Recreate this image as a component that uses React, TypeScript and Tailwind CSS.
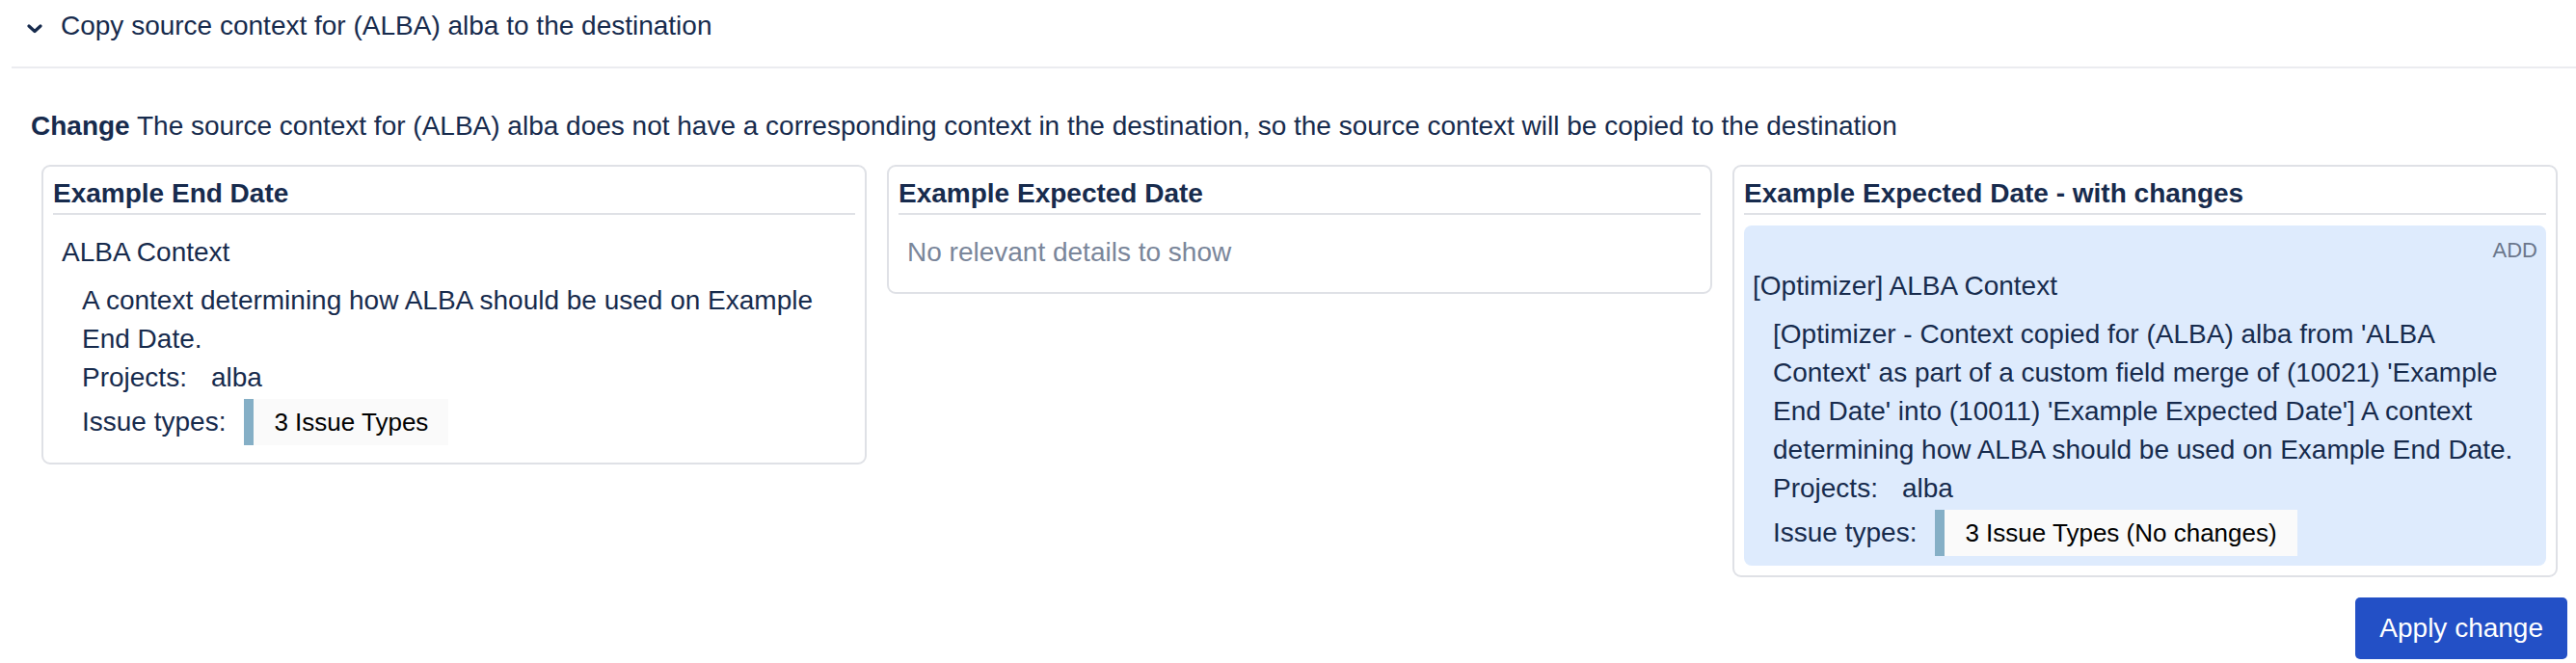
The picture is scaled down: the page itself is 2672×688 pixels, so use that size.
import React from 'react';

const Chevron = () => (
  <svg width="16" height="10" viewBox="0 0 16 10" className="shrink-0 mt-[5px]">
    <path d="M2 2l6 5.5L14 2" fill="none" stroke="#172b4d" strokeWidth="3.2" strokeLinecap="round" strokeLinejoin="round" />
  </svg>
);

interface ContextProps {
  name: string;
  description: string;
  project: string;
  issueTypes: string;
  highlight?: boolean;
}

const ContextDetails: React.FC<ContextProps> = ({ name, description, project, issueTypes, highlight }) => (
  <div className={`px-[9px] pt-[8px] ${highlight ? 'bg-[#deebfd] rounded-[8px] pb-[10px]' : 'pb-[8px]'}`}>
    {highlight && <div className="text-right text-[22px] leading-[35px] text-[#6b778c]">ADD</div>}
    <div>{name}</div>
    <div className="mt-[10px] ml-[21px]">
      <div>{description}</div>
      <div>
        <span>Projects:</span>
        <span className="ml-[25px]">{project}</span>
      </div>
      <div className="mt-[2px] flex items-center">
        <span>Issue types:</span>
        <div className="ml-[19px] h-[48px] flex bg-[#fafafa]">
          <div className="w-[10px] bg-[#85afc6]" />
          <span className="px-[21px] flex items-center text-[26px] text-black">{issueTypes}</span>
        </div>
      </div>
    </div>
  </div>
);

const Panel: React.FC<{ title: string; children: React.ReactNode }> = ({ title, children }) => (
  <div className="rounded-[9px] border-2 border-[#dfe1e6] px-[10px] pt-[8px] pb-[10px]">
    <div className="border-b-2 border-[#dfe1e6] font-bold">{title}</div>
    <div className="mt-[11px]">{children}</div>
  </div>
);

export default function App() {
  return (
    <div className="w-[2672px] h-[688px] bg-white pl-[12px] text-[28px] leading-[40px] text-[#172b4d] font-['Liberation_Sans',Arial,sans-serif]">
      <div className="flex items-center gap-[19px] pl-[16px] pt-[7px] pb-[22px]">
        <Chevron />
        <span>Copy source context for (ALBA) alba to the destination</span>
      </div>
      <div className="h-[2px] bg-[#ebecf0]" />

      <div className="pl-[20px] pr-[9px]">
        <p className="mt-[40px]">
          <span className="font-bold">Change</span> The source context for (ALBA) alba does not have a corresponding context in the destination, so the source context will be copied to the destination
        </p>

        <div className="mt-[20px] ml-[11px] mr-[10px] grid grid-cols-3 gap-[21px] items-start">
          <Panel title="Example End Date">
            <ContextDetails
              name="ALBA Context"
              description="A context determining how ALBA should be used on Example End Date."
              project="alba"
              issueTypes="3 Issue Types"
            />
          </Panel>
          <Panel title="Example Expected Date">
            <div className="px-[9px] pt-[8px] pb-[11px] text-[#7a869a]">No relevant details to show</div>
          </Panel>
          <Panel title="Example Expected Date - with changes">
            <ContextDetails
              highlight
              name="[Optimizer] ALBA Context"
              description="[Optimizer - Context copied for (ALBA) alba from 'ALBA Context' as part of a custom field merge of (10021) 'Example End Date' into (10011) 'Example Expected Date'] A context determining how ALBA should be used on Example End Date."
              project="alba"
              issueTypes="3 Issue Types (No changes)"
            />
          </Panel>
        </div>

        <div className="mt-[21px] flex justify-end">
          <button className="h-[64px] px-[25px] rounded-[5px] bg-[#2350c6] text-white text-[28px]">Apply change</button>
        </div>
      </div>
    </div>
  );
}
